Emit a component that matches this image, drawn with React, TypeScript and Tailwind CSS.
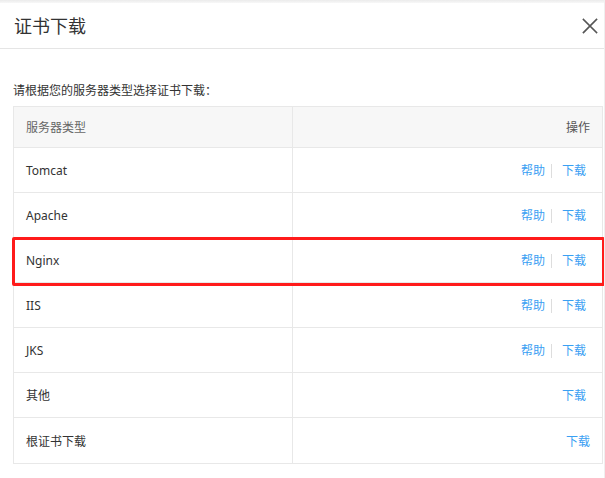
import React from 'react';

interface ServerRow {
  name: string;
  help: boolean;
  last?: boolean;
}

const rows: ServerRow[] = [
  { name: 'Tomcat', help: true },
  { name: 'Apache', help: true },
  { name: 'Nginx', help: true },
  { name: 'IIS', help: true },
  { name: 'JKS', help: true },
  { name: '其他', help: false },
  { name: '根证书下载', help: false, last: true },
];

const font = { fontFamily: '"Noto Sans", "Noto Sans CJK SC", sans-serif' };

function CloseIcon() {
  return (
    <svg width="16" height="16" viewBox="0 0 16 16" className="text-[#555]">
      <path d="M1.5 1.5 L14.5 14.5 M14.5 1.5 L1.5 14.5" stroke="currentColor" strokeWidth="1.7" strokeLinecap="square" fill="none" />
    </svg>
  );
}

export default function App() {
  return (
    <div className="relative w-[605px] h-[478px] bg-white border-r border-[#efefef] overflow-hidden" style={font}>
      <div className="h-[3px] bg-gradient-to-b from-[#ebebeb] to-[#f8f8f8]" />

      {/* header */}
      <div className="h-[46px] flex items-center justify-between pl-[14px] pr-[3px] border-b border-[#e5e5e5]">
        <h2 className="text-[18px] leading-6 text-[#333] pt-px">证书下载</h2>
        <button className="w-[20px] h-[20px] flex items-center justify-center mr-[1px] mt-[1px]">
          <CloseIcon />
        </button>
      </div>

      {/* body */}
      <div className="pt-[33px] pl-[13px]">
        <p className="text-[12px] leading-[18px] text-[#333] mb-[6px]">请根据您的服务器类型选择证书下载：</p>

        <div className="w-[590px] border border-[#e8e8e8] text-[12px] text-[#333]">
          <div className="flex h-[41px] bg-[#f7f7f7] border-b border-[#e8e8e8]">
            <div className="w-[279px] border-r border-[#e8e8e8] flex items-center pl-[12px] pt-px text-[#666]">服务器类型</div>
            <div className="flex-1 flex items-center justify-end pr-[12px] pt-px text-[#555]">操作</div>
          </div>
          {rows.map((r, i) => (
            <div
              key={r.name}
              className={`flex h-[45px] ${i < rows.length - 1 ? 'border-b border-[#e8e8e8]' : ''}`}
            >
              <div className="w-[279px] border-r border-[#e8e8e8] flex items-center pl-[12px] pt-[2px]">{r.name}</div>
              <div className={`flex-1 flex items-center justify-end pt-[2px] ${r.last ? 'pr-[12px]' : 'pr-[16px]'}`}>
                {r.help && (
                  <>
                    <a className="text-[#3aa0f3] cursor-pointer">帮助</a>
                    <span className="ml-[6px] mr-[10px] w-px h-[14px] bg-[#dddddd]" />
                  </>
                )}
                <a className="text-[#3aa0f3] cursor-pointer">下载</a>
              </div>
            </div>
          ))}
        </div>
      </div>

      {/* annotation box around the Nginx row */}
      <div className="absolute left-[12px] top-[237px] w-[593px] h-[49px] border-[3px] border-[#ff1b1b] rounded-[2px] pointer-events-none" />
    </div>
  );
}
